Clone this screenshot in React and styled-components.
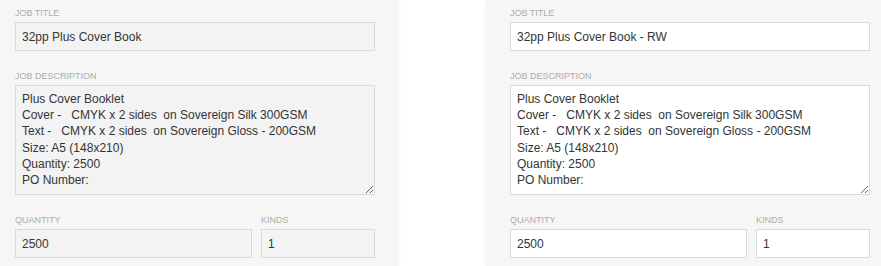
import React from "react";
import styled, { createGlobalStyle } from "styled-components";

const Global = createGlobalStyle`
  html, body { margin: 0; padding: 0; background: #ffffff; overflow: hidden; }
  body { font-family: "Liberation Sans", Arial, sans-serif; }
  * { box-sizing: border-box; }
`;

const Page = styled.div`
  display: flex;
  width: 881px;
  height: 266px;
  background: #ffffff;
`;

const Panel = styled.section`
  flex: ${(p) => (p.$grow ? "1 1 auto" : "0 0 398px")};
  height: 266px;
  background: #f7f6f6;
  padding: 8px ${(p) => p.$padRight}px 0 ${(p) => p.$padLeft}px;
  box-shadow: 0 0 4px rgba(0, 0, 0, 0.07);
  position: relative;
  z-index: 1;
`;

const Spacer = styled.div`
  flex: 0 0 88px;
  background: #ffffff;
`;

const Field = styled.div`
  display: flex;
  flex-direction: column;
  margin-bottom: 20px;
  min-width: 0;
  flex: ${(p) => p.$flex || "none"};
`;

const Row = styled.div`
  display: flex;
  gap: 9px;
`;

const Label = styled.label`
  font-size: 9px;
  line-height: 11px;
  height: 11px;
  margin-bottom: 3px;
  color: #acacac;
  text-transform: uppercase;
`;

const Input = styled.input`
  width: 100%;
  height: 29px;
  margin: 0;
  padding: 0 6px;
  border: 1px solid #dadada;
  border-radius: 0;
  background: ${(p) => (p.$locked ? "#f3f3f3" : "#ffffff")};
  color: #333333;
  font-family: "Liberation Sans", Arial, sans-serif;
  font-size: 12px;
  outline: none;
`;

const TextArea = styled.textarea`
  width: 100%;
  height: 110px;
  margin: 0;
  padding: 5px 6px;
  border: 1px solid #dadada;
  border-radius: 0;
  background: ${(p) => (p.$locked ? "#f3f3f3" : "#ffffff")};
  color: #333333;
  font-family: "Liberation Sans", Arial, sans-serif;
  font-size: 12px;
  line-height: 16.2px;
  outline: none;
  resize: vertical;
  overflow: hidden;
  display: block;
`;

const Column = styled.div`
  width: 360px;
`;

const description =
  "Plus Cover Booklet\nCover -   CMYK x 2 sides  on Sovereign Silk 300GSM\nText -   CMYK x 2 sides  on Sovereign Gloss - 200GSM\nSize: A5 (148x210)\nQuantity: 2500\nPO Number:";

function JobForm({ title, locked }) {
  return (
    <Column>
      <Field>
        <Label>Job Title</Label>
        <Input $locked={locked} readOnly value={title} />
      </Field>
      <Field>
        <Label>Job Description</Label>
        <TextArea $locked={locked} readOnly value={description} />
      </Field>
      <Row>
        <Field $flex="1 1 auto">
          <Label>Quantity</Label>
          <Input $locked={locked} readOnly value="2500" />
        </Field>
        <Field $flex="0 0 114px">
          <Label>Kinds</Label>
          <Input $locked={locked} readOnly value="1" />
        </Field>
      </Row>
    </Column>
  );
}

export default function App() {
  return (
    <>
      <Global />
      <Page>
        <Panel $padLeft={15} $padRight={23}>
          <JobForm title="32pp Plus Cover Book" locked />
        </Panel>
        <Spacer />
        <Panel $grow $padLeft={24} $padRight={11}>
          <JobForm title="32pp Plus Cover Book - RW" />
        </Panel>
      </Page>
    </>
  );
}
